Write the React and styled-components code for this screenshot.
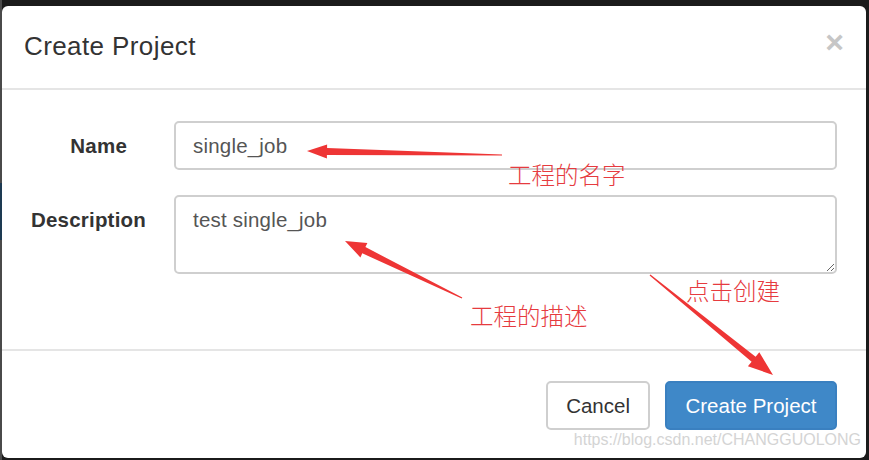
import React from 'react';
import styled, { createGlobalStyle } from 'styled-components';

const GlobalStyle = createGlobalStyle`
    html, body {
        margin: 0;
        padding: 0;
        background: #1b1b1b;
        overflow: hidden;
    }
    * { box-sizing: border-box; }
`

const arrows = [
    { tail: [502, 155], tip: [307, 151], head: 20, wing: 7, start: 3.5, end: 0.6 },
    { tail: [462, 298], tip: [345, 241], head: 21, wing: 8, start: 3.5, end: 0.6 },
    { tail: [650, 275], tip: [773, 375], head: 25, wing: 9, start: 3.2, end: 0.6 },
]

// tapered arrow: wide near the head, thin at the tail
function arrowPoints({ tail, tip, head, wing, start, end }) {
    const dx = tip[0] - tail[0]
    const dy = tip[1] - tail[1]
    const len = Math.hypot(dx, dy)
    const ux = dx / len, uy = dy / len
    const nx = -uy, ny = ux
    const bx = tip[0] - ux * head, by = tip[1] - uy * head
    const p = (x, y) => `${x.toFixed(1)},${y.toFixed(1)}`
    return [
        p(tail[0] + nx * end, tail[1] + ny * end),
        p(bx + nx * start, by + ny * start),
        p(bx + nx * wing, by + ny * wing),
        p(tip[0], tip[1]),
        p(bx - nx * wing, by - ny * wing),
        p(bx - nx * start, by - ny * start),
        p(tail[0] - nx * end, tail[1] - ny * end),
    ].join(' ')
}

export default function App() {
    return (
        <>
            <GlobalStyle />
            <Backdrop>
                <Modal>
                    <Header>
                        <Title>Create Project</Title>
                        <Close>×</Close>
                    </Header>
                    <Body>
                        <Label $pad={25}>Name</Label>
                        <Input readOnly defaultValue="single_job" />
                        <Label $pad={6}>Description</Label>
                        <TextArea readOnly defaultValue="test single_job" />
                    </Body>
                    <Footer>
                        <Button>Cancel</Button>
                        <Button $primary>Create Project</Button>
                    </Footer>
                </Modal>

                <Arrows width="869" height="460" viewBox="0 0 869 460">
                    {arrows.map((a, i) => (
                        <polygon key={i} points={arrowPoints(a)} fill="#ee3535" />
                    ))}
                </Arrows>
                <Note $x={508} $y={160}>工程的名字</Note>
                <Note $x={470} $y={301}>工程的描述</Note>
                <Note $x={686} $y={276}>点击创建</Note>
                <Watermark>https://blog.csdn.net/CHANGGUOLONG</Watermark>
            </Backdrop>
        </>
    )
}

const Backdrop = styled.div`
    position: relative;
    width: 869px;
    height: 460px;
    padding: 6px 3px 2px 2px;
    background:
        linear-gradient(#1d3a52, #1d3a52) 0 183px / 2px 57px no-repeat,
        linear-gradient(to right, #4a4a4a 0 2px, #1b1b1b 2px);
    font-family: "Liberation Sans", Arial, sans-serif;
`

const Modal = styled.div`
    display: flex;
    flex-direction: column;
    height: 452px;
    background: #fff;
    border-radius: 6px;
    overflow: hidden;
`

const Header = styled.div`
    display: flex;
    align-items: center;
    justify-content: space-between;
    height: 84px;
    padding: 0 22px 2px 22px;
    border-bottom: 2px solid #e5e5e5;
`

const Title = styled.h4`
    margin: 0;
    font-size: 26px;
    font-weight: 400;
    color: #333;
    letter-spacing: 0.4px;
`

const Close = styled.span`
    font-size: 32px;
    font-weight: 700;
    line-height: 1;
    color: #c6c6c6;
    margin-top: -8px;
`

const Body = styled.div`
    display: grid;
    grid-template-columns: 150px 1fr;
    align-content: start;
    column-gap: 22px;
    row-gap: 25px;
    padding: 31px 29px 0 0;
    height: 261px;
    border-bottom: 2px solid #e5e5e5;
`

const Label = styled.label`
    align-self: start;
    text-align: right;
    padding-right: ${p => p.$pad}px;
    font-size: 20.5px;
    font-weight: 700;
    line-height: 49px;
    color: #333;
    letter-spacing: 0.2px;
`

const fieldStyle = `
    width: 100%;
    border: 2px solid #cfcfcf;
    border-radius: 5px;
    padding: 0 17px;
    font-family: "Liberation Sans", Arial, sans-serif;
    font-size: 20.5px;
    letter-spacing: 0.2px;
    color: #555;
    background: #fff;
    outline: none;
`

const Input = styled.input`
    ${fieldStyle}
    height: 49px;
`

const TextArea = styled.textarea`
    ${fieldStyle}
    height: 79px;
    padding-top: 11px;
    resize: vertical;
    line-height: 1.2;
`

const Footer = styled.div`
    display: flex;
    justify-content: flex-end;
    gap: 15px;
    padding: 30px 29px 0 0;
`

const Button = styled.button`
    height: 49px;
    padding: 0 ${p => (p.$primary ? 18.5 : 18)}px;
    border-radius: 5px;
    border: 2px solid ${p => (p.$primary ? '#3a80c0' : '#cfcfcf')};
    background: ${p => (p.$primary ? '#3f88c8' : '#fff')};
    color: ${p => (p.$primary ? '#fff' : '#333')};
    font-family: "Liberation Sans", Arial, sans-serif;
    font-size: 20.5px;
`

const Arrows = styled.svg`
    position: absolute;
    top: 0;
    left: 0;
    pointer-events: none;
`

const Note = styled.span`
    position: absolute;
    left: ${p => p.$x}px;
    top: ${p => p.$y}px;
    font-family: "Noto Sans CJK SC", sans-serif;
    font-size: 23.5px;
    font-weight: 300;
    line-height: 28px;
    color: #e63b3f;
`

const Watermark = styled.span`
    position: absolute;
    right: 8px;
    top: 431px;
    font-family: "Liberation Sans", Arial, sans-serif;
    font-size: 16px;
    color: #d4d4d4;
    text-shadow: 0 0 1px #fff;
`
